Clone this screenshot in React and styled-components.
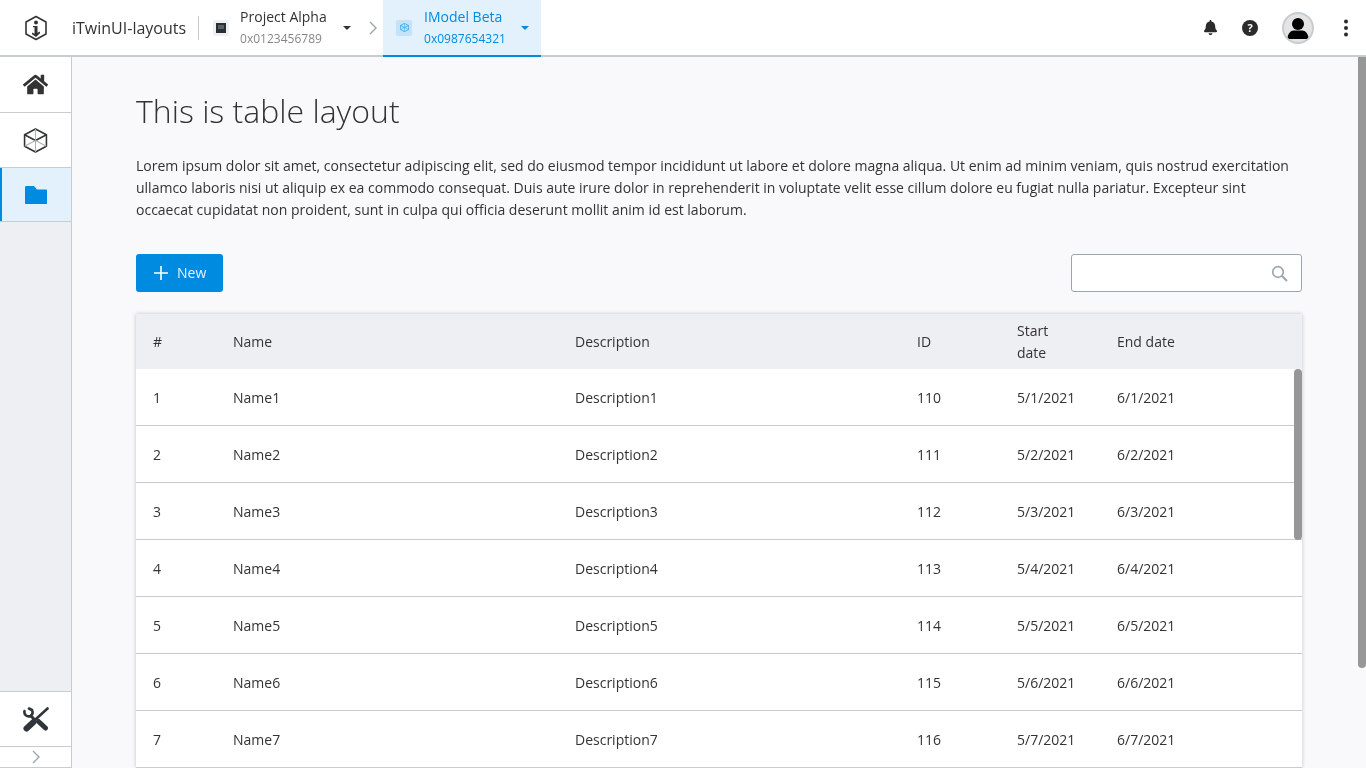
import React from 'react';
import styled, { createGlobalStyle } from 'styled-components';
import { FaBell, FaHome } from 'react-icons/fa';

const GlobalStyle = createGlobalStyle`
  html, body {
    margin: 0;
    height: 100%;
    overflow: hidden;
  }
  body {
    font-family: 'Open Sans', 'Noto Sans', sans-serif;
    font-size: 14px;
    color: #333;
    background: #f9f9fb;
  }
  * { box-sizing: border-box; }
`;

const Page = styled.div`
  display: flex;
  flex-direction: column;
  height: 768px;
  overflow: hidden;
  will-change: transform;
`;

const Header = styled.header`
  display: flex;
  align-items: center;
  flex: 0 0 57px;
  height: 57px;
  background: #fff;
  border-bottom: 2px solid #c7ccd1;
`;

const LogoBox = styled.div`
  display: flex;
  align-items: center;
  justify-content: center;
  width: 72px;
  height: 55px;
`;

const AppName = styled.div`
  font-size: 16px;
  color: #333;
  padding-right: 12px;
  border-right: 1px solid #c7ccd1;
  line-height: 24px;
  margin-right: 14px;
`;

const Crumb = styled.div`
  display: flex;
  align-items: center;
  height: 57px;
  margin-bottom: -2px;
  width: ${props => props.width}px;
  padding-left: ${props => (props.active ? 13 : 0)}px;
  background: ${props => (props.active ? '#e2f1fb' : 'transparent')};
  border-bottom: 2px solid ${props => (props.active ? '#008be1' : 'transparent')};
  color: ${props => (props.active ? '#008be1' : '#333')};
`;

const CrumbThumb = styled.div`
  display: flex;
  align-items: center;
  justify-content: center;
  width: 16px;
  height: 16px;
  border-radius: 2px;
  background: ${props => (props.active ? '#c5e3f8' : '#eef0f3')};
  margin-right: ${props => (props.active ? 12 : 11)}px;
`;

const CrumbText = styled.div`
  display: flex;
  flex-direction: column;
  width: 104px;
`;

const CrumbTitle = styled.span`
  font-size: 14px;
  line-height: 22px;
`;

const CrumbSub = styled.span`
  font-size: 12px;
  line-height: 22px;
  opacity: ${props => (props.active ? 1 : 0.6)};
`;

const Caret = styled.div`
  width: 0;
  height: 0;
  margin-left: ${props => props.gap}px;
  border-left: 4px solid transparent;
  border-right: 4px solid transparent;
  border-top: 4px solid ${props => (props.active ? '#008be1' : '#333')};
`;

const Separator = styled.div`
  display: flex;
  justify-content: center;
  width: 25px;
  padding-left: 4px;
`;

const HeaderActions = styled.div`
  display: flex;
  align-items: center;
  margin-left: auto;
`;

const ActionIcon = styled.div`
  display: flex;
  align-items: center;
  justify-content: center;
  width: 40px;
  height: 40px;
  color: #2b2b2b;
`;

const Avatar = styled.div`
  width: 32px;
  height: 32px;
  margin: 0 12px;
  border-radius: 50%;
  border: 2px solid #c7ccd1;
  background: #e4e4e4;
  overflow: hidden;
`;

const Body = styled.div`
  display: flex;
  flex: 1;
  min-height: 0;
`;

const Sidebar = styled.nav`
  display: flex;
  flex-direction: column;
  flex: 0 0 72px;
  background: #eeeff3;
  border-right: 1px solid #c7ccd1;
`;

const SideItem = styled.div`
  display: flex;
  align-items: center;
  justify-content: center;
  height: ${props => props.height || 55}px;
  background: ${props => (props.active ? '#e2f1fb' : '#fff')};
  border-bottom: 1px solid #c7ccd1;
  border-top: ${props => (props.top ? '1px solid #c7ccd1' : '0')};
  box-shadow: ${props => (props.active ? 'inset 2px 0 0 #008be1' : 'none')};
  color: ${props => (props.active ? '#008be1' : '#333')};
`;

const SideSpacer = styled.div`
  flex: 1;
`;

const Main = styled.main`
  position: relative;
  flex: 1;
  min-width: 0;
  padding: 0 64px;
  overflow: hidden;
`;

const Title = styled.h1`
  margin: 29px 0 0;
  font-size: 32px;
  font-weight: 300;
  line-height: 50px;
  color: #333;
`;

const Intro = styled.p`
  margin: 19px 0 0;
  font-size: 14px;
  line-height: 22px;
  color: #333;
`;

const Toolbar = styled.div`
  display: flex;
  justify-content: space-between;
  margin-top: 33px;
`;

const NewButton = styled.button`
  display: flex;
  align-items: center;
  height: 38px;
  width: 87px;
  padding: 0 0 0 17px;
  border: 0;
  border-radius: 3px;
  background: #008be1;
  color: #e4f3fc;
  font: inherit;
  font-size: 14px;
`;

const ButtonLabel = styled.span`
  margin: 0 0 2px 8px;
`;

const Search = styled.div`
  display: flex;
  align-items: center;
  justify-content: flex-end;
  width: 231px;
  height: 38px;
  padding-right: 13px;
  background: #fff;
  border: 1px solid #9ba5af;
  border-radius: 3px;
`;

const Table = styled.div`
  position: relative;
  margin-top: 22px;
  background: #fff;
  box-shadow: 0 0 4px rgba(0, 0, 0, 0.22);
`;

const Row = styled.div`
  display: grid;
  grid-template-columns: 80px 342px 342px 100px 100px 1fr;
  align-items: center;
  height: ${props => (props.head ? 55 : 57)}px;
  padding-top: ${props => (props.head ? 0 : 1)}px;
  background: ${props => (props.head ? '#eeeff3' : '#fff')};
  border-bottom: ${props => (props.head ? '0' : '1px solid #c7ccd1')};
`;

const Cell = styled.div`
  padding-left: 17px;
  font-size: 14px;
  line-height: 22px;
  color: #333;
  width: ${props => (props.narrow ? '80px' : 'auto')};
`;

const TableThumb = styled.div`
  position: absolute;
  top: 55px;
  right: 0;
  width: 8px;
  height: 171px;
  border-radius: 4px;
  background: #979797;
`;

const PageThumb = styled.div`
  position: absolute;
  top: 0;
  right: 0;
  width: 8px;
  height: 611px;
  border-radius: 0 0 4px 4px;
  background: #979797;
`;

const rows = [1, 2, 3, 4, 5, 6, 7];

const Logo = () => (
  <svg width="24" height="26" viewBox="0 0 24 26" fill="none">
    <path d="M12 1.500 22 7v12l-10 5.500L2 19V7z" stroke="#333" strokeWidth="1.600" strokeLinejoin="round" />
    <circle cx="12" cy="7.500" r="2" fill="#333" />
    <path d="M9 11h4.500v6.800l2.500-1.300v1.800L12 22l-4-2.700v-1.800l2.500 1.300v-6.500H9z" fill="#333" />
  </svg>
);

const Cube = ({ size, color, light }) => (
  <svg width={size} height={size} viewBox="0 0 24 24" fill="none">
    <path d="M12 1 22.500 6.500v11L12 23 1.500 17.500v-11z" stroke={color} strokeWidth="1.500" strokeLinejoin="round" />
    <path d="M1.500 6.500 12 12l10.500-5.500" stroke={color} strokeWidth="1.500" strokeLinejoin="round" />
    <path d="M12 12v11M12 12 1.500 17.500M12 12l10.500 5.500M12 1v11" stroke={light} strokeWidth="1" />
  </svg>
);

const Folder = () => (
  <svg width="22" height="18" viewBox="0 0 22 18" fill="#008be1">
    <path d="M0 1.500C0 .5.5 0 1.500 0H9l3 3.500h9c.7 0 1 .4 1 1V17c0 .6-.4 1-1 1H1c-.6 0-1-.4-1-1z" />
  </svg>
);

const Tools = () => (
  <svg width="26" height="25" viewBox="0 0 26 25" fill="none" stroke="#2f3539" strokeLinecap="round">
    <path d="M24.500 1.500 13 12" strokeWidth="2.600" />
    <path d="M10.500 15 3.500 21.500" strokeWidth="6" />
    <path d="M1.500 4C.8 7.500 4 10.500 7.500 9c2-1 2.500-3.500 1.500-6L6 1.500" strokeWidth="2.600" />
    <path d="M8 9l2.500 2.500" strokeWidth="3" />
    <path d="M15.500 14.500 22.500 21" strokeWidth="5" />
  </svg>
);

const Person = () => (
  <svg width="28" height="28" viewBox="0 0 28 28" fill="#000">
    <circle cx="14" cy="10" r="6" />
    <path d="M3.500 25c0-5.500 3.500-8.500 6-8.500h9c2.500 0 6 3 6 8.500z" />
  </svg>
);

function App() {
  return (
    <Page>
      <GlobalStyle />
      <Header>
        <LogoBox><Logo /></LogoBox>
        <AppName>iTwinUI-layouts</AppName>
        <Crumb width={145}>
          <CrumbThumb>
            <svg width="10" height="10" viewBox="0 0 10 10">
              <rect width="10" height="10" fill="#2b2f33" />
              <rect x="2" y="2" width="6" height="4" fill="#55626b" />
            </svg>
          </CrumbThumb>
          <CrumbText>
            <CrumbTitle>Project Alpha</CrumbTitle>
            <CrumbSub>0x0123456789</CrumbSub>
          </CrumbText>
          <Caret gap={-1} />
        </Crumb>
        <Separator>
          <svg width="10" height="14" viewBox="0 0 10 14" fill="none">
            <path d="M2 1l6 6-6 6" stroke="#9ba5af" strokeWidth="1.400" />
          </svg>
        </Separator>
        <Crumb active width={158}>
          <CrumbThumb active>
            <Cube size={9} color="#008be1" light="#008be1" />
          </CrumbThumb>
          <CrumbText>
            <CrumbTitle>IModel Beta</CrumbTitle>
            <CrumbSub active>0x0987654321</CrumbSub>
          </CrumbText>
          <Caret active gap={-7} />
        </Crumb>
        <HeaderActions>
          <ActionIcon><FaBell size={15} /></ActionIcon>
          <ActionIcon>
            <svg width="16" height="16" viewBox="0 0 16 16">
              <circle cx="8" cy="8" r="8" fill="#2b2b2b" />
              <text x="8" y="12" textAnchor="middle" fontSize="11" fontWeight="700" fontFamily="Open Sans" fill="#fff">?</text>
            </svg>
          </ActionIcon>
          <Avatar><Person /></Avatar>
          <ActionIcon>
            <svg width="6" height="18" viewBox="0 0 6 18" fill="#2b2b2b">
              <circle cx="3" cy="2.500" r="2" />
              <circle cx="3" cy="9" r="2" />
              <circle cx="3" cy="15.500" r="2" />
            </svg>
          </ActionIcon>
        </HeaderActions>
      </Header>
      <Body>
        <Sidebar>
          <SideItem height={56}><FaHome size={25} /></SideItem>
          <SideItem><Cube size={25} color="#333" light="#a9b1b8" /></SideItem>
          <SideItem active height={54}><Folder /></SideItem>
          <SideSpacer />
          <SideItem top height={56}><Tools /></SideItem>
          <SideItem height={21}>
            <svg width="10" height="14" viewBox="0 0 10 14" fill="none">
              <path d="M2 1l6 6-6 6" stroke="#9ba5af" strokeWidth="1.400" />
            </svg>
          </SideItem>
        </Sidebar>
        <Main>
          <Title>This is table layout</Title>
          <Intro>
            Lorem ipsum dolor sit amet, consectetur adipiscing elit, sed do eiusmod tempor incididunt ut labore et dolore magna aliqua. Ut enim ad minim veniam, quis nostrud exercitation ullamco laboris nisi ut aliquip ex ea commodo consequat. Duis aute irure dolor in reprehenderit in voluptate velit esse cillum dolore eu fugiat nulla pariatur. Excepteur sint occaecat cupidatat non proident, sunt in culpa qui officia deserunt mollit anim id est laborum.
          </Intro>
          <Toolbar>
            <NewButton>
              <svg width="16" height="16" viewBox="0 0 16 16">
                <path d="M7.200 1h1.600v6.200H15v1.600H8.800V15H7.200V8.800H1V7.200h6.200z" fill="#fff" />
              </svg>
              <ButtonLabel>New</ButtonLabel>
            </NewButton>
            <Search>
              <svg width="17" height="17" viewBox="0 0 17 17" fill="none">
                <circle cx="7" cy="7" r="5.300" stroke="#9ba5af" strokeWidth="1.700" />
                <path d="M10.800 10.800l5.200 5.200" stroke="#9ba5af" strokeWidth="2" />
              </svg>
            </Search>
          </Toolbar>
          <Table>
            <Row head>
              <Cell>#</Cell>
              <Cell>Name</Cell>
              <Cell>Description</Cell>
              <Cell>ID</Cell>
              <Cell narrow>Start date</Cell>
              <Cell>End date</Cell>
            </Row>
            {rows.map(n => (
              <Row key={n}>
                <Cell>{n}</Cell>
                <Cell>Name{n}</Cell>
                <Cell>Description{n}</Cell>
                <Cell>{109 + n}</Cell>
                <Cell>5/{n}/2021</Cell>
                <Cell>6/{n}/2021</Cell>
              </Row>
            ))}
            <TableThumb />
          </Table>
          <PageThumb />
        </Main>
      </Body>
    </Page>
  );
}

export default App;
